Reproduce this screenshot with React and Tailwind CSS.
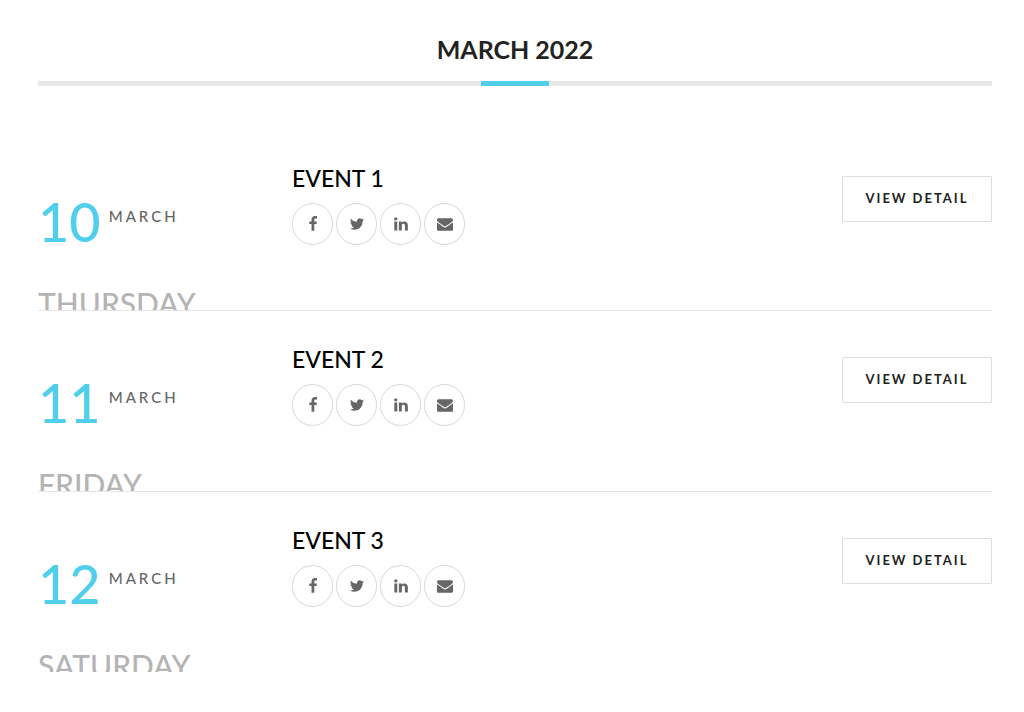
import React from 'react';

const events = [
  { id: 1, day: '10', month: 'March', weekday: 'Thursday', title: 'Event 1' },
  { id: 2, day: '11', month: 'March', weekday: 'Friday', title: 'Event 2' },
  { id: 3, day: '12', month: 'March', weekday: 'Saturday', title: 'Event 3' },
];

const shareLinks = [
  {
    label: 'Facebook',
    path: 'M1343 12v264h-157q-86 0-116 36t-30 108v189h293l-39 296h-254v759h-306v-759h-255v-296h255v-218q0-186 104-288.5t277-102.5q147 0 228 12z',
  },
  {
    label: 'Twitter',
    path: 'M1684 408q-67 98-162 167 1 14 1 42 0 130-38 259.5t-115.5 248.5-184.5 210.5-258 146-323 54.5q-271 0-496-145 35 4 78 4 225 0 401-138-105-2-188-64.5t-114-159.5q33 5 61 5 43 0 85-11-112-23-185.5-111.5t-73.5-205.5v-4q68 38 146 41-66-44-105-115t-39-154q0-88 44-163 121 149 294.5 238.5t371.5 99.5q-8-38-8-74 0-134 94.5-228.5t228.5-94.5q140 0 236 102 109-21 205-78-37 115-142 178 93-10 186-50z',
  },
  {
    label: 'LinkedIn',
    path: 'M477 625v991h-330v-991h330zm21-306q1 73-50.5 122t-135.5 49h-2q-82 0-132-49t-50-122q0-74 51.5-122.5t134.5-48.5 133 48.5 51 122.5zm1166 729v568h-329v-530q0-105-40.5-164.5t-126.5-59.5q-63 0-105.5 34.5t-63.5 85.5q-11 30-11 81v553h-329v-991h329v144h-2q20-32 41-56t56.5-52 87-43.5 114.5-15.5q171 0 275 113.5t104 332.5z',
  },
  {
    label: 'Email',
    path: 'M1792 710v794q0 66-47 113t-113 47h-1472q-66 0-113-47t-47-113v-794q44 49 101 87 362 246 497 345 57 42 92.5 65.5t94.5 48 110 24.5h2q51 0 110-24.5t94.5-48 92.5-65.5q170-123 498-345 57-39 100-87zm0-294q0 79-49 151t-122 123q-376 261-468 325-10 7-42.5 31t-54 38.8-52 33.2-57.5 27.5-50 9h-2q-23 0-50-9t-57.5-27.5-52-33.2-54-38.8-42.5-31q-91-64-262-182.5t-205-142.5q-62-42-117-115.5t-55-136.5q0-78 41.5-130t118.5-52h1472q65 0 112.5 47t47.5 113z',
  },
];

const EventRow = ({ event }) => (
  <li className="flex items-start border-b border-[#e5e5e5] last:border-b-0">
    {/* Date */}
    <div className="w-[254px] shrink-0 pt-14">
      <div className="flex items-start gap-2">
        <span className="text-[54px] leading-[72px] font-medium text-[#4fcfeb]">{event.day}</span>
        <span className="pt-[18px] text-[15px] leading-6 font-medium tracking-[3px] text-[#666] uppercase">{event.month}</span>
      </div>
      {/* The weekday is half hidden behind the row's lower edge */}
      <div className="mt-7 h-6 overflow-hidden">
        <p className="text-[30px] leading-[34px] font-medium text-[#b4b4b4] uppercase">{event.weekday}</p>
      </div>
    </div>

    {/* Title and share links */}
    <div className="grow pt-8">
      <h3 className="text-[23px] leading-8 font-medium text-black uppercase">{event.title}</h3>
      <div className="mt-[9px] flex gap-1">
        {shareLinks.map(link => (
          <a
            key={link.label}
            href="#"
            aria-label={link.label}
            className="flex h-[42px] w-[41px] -mr-px items-center justify-center rounded-full border border-[#d8d8d8] text-[#666]"
          >
            <svg viewBox="0 0 1792 1792" className="h-4 w-4" fill="currentColor">
              <path d={link.path} />
            </svg>
          </a>
        ))}
      </div>
    </div>

    <button className="mt-[46px] h-[46px] w-[150px] shrink-0 rounded-[1px] border border-[#ddd] text-[13px] font-bold tracking-[2px] text-[#222] uppercase">
      View Detail
    </button>
  </li>
);

export default function App() {
  return (
    <main className="bg-white pt-8 pr-8 pb-10 pl-[38px] font-['Lato',sans-serif]">
      <h2 className="text-center text-[25px] leading-[34px] font-bold text-[#222] uppercase">March 2022</h2>
      <div className="mt-[15px] flex h-[5px] justify-center bg-[#e7e7e7]">
        <div className="w-[68px] bg-[#4fcfeb]" />
      </div>
      <ul className="mt-11">
        {events.map(event => (
          <EventRow key={event.id} event={event} />
        ))}
      </ul>
    </main>
  );
}
